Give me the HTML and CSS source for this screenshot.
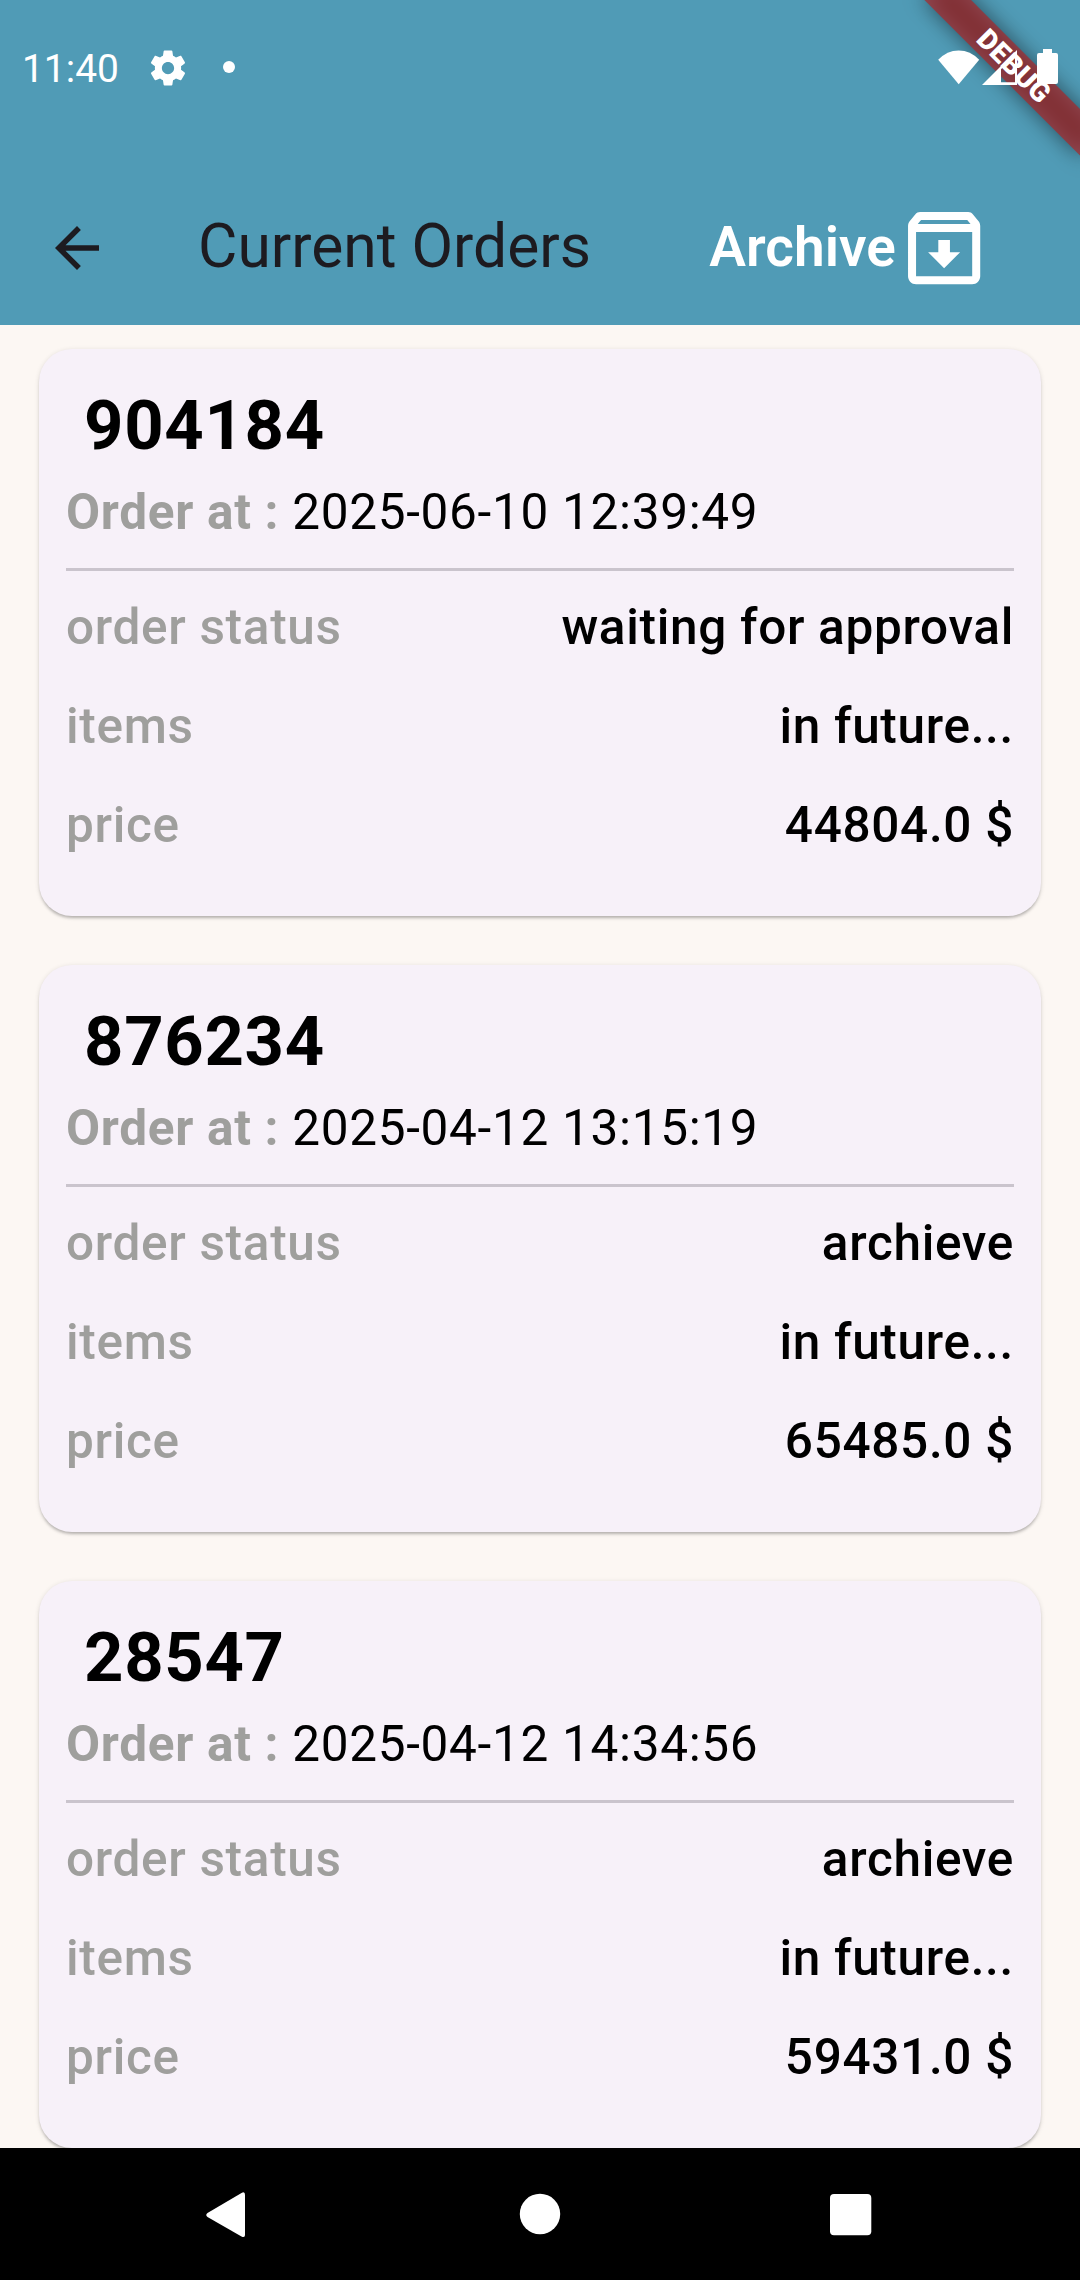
FILE: index.html
```html
<!DOCTYPE html>
<html lang="en">
<head>
<meta charset="utf-8">
<title>Current Orders</title>
<link rel="stylesheet" href="styles.css">
</head>
<body>
<div class="screen">
  <header class="header">
    <div class="debug-corner">
      <div class="debug-shadow"></div>
      <div class="debug-banner">DEBUG</div>
    </div>
    <div class="status">
      <span class="clock">11:40</span>
      <svg class="gear" viewBox="0 0 24 24"><path fill="currentColor" d="M19.43 12.98c.04-.32.07-.64.07-.98s-.03-.66-.07-.98l2.11-1.65c.19-.15.24-.42.12-.64l-2-3.46c-.12-.22-.39-.3-.61-.22l-2.49 1c-.52-.4-1.08-.73-1.69-.98l-.38-2.65C14.46 2.18 14.25 2 14 2h-4c-.25 0-.46.18-.49.42l-.38 2.65c-.61.25-1.17.59-1.69.98l-2.49-1c-.23-.09-.49 0-.61.22l-2 3.46c-.13.22-.07.49.12.64l2.11 1.65c-.04.32-.07.65-.07.98s.03.66.07.98l-2.11 1.65c-.19.15-.24.42-.12.64l2 3.46c.12.22.39.3.61.22l2.49-1c.52.4 1.08.73 1.69.98l.38 2.65c.03.24.24.42.49.42h4c.25 0 .46-.18.49-.42l.38-2.65c.61-.25 1.17-.59 1.69-.98l2.49 1c.23.09.49 0 .61-.22l2-3.46c.12-.22.07-.49-.12-.64l-2.11-1.65zM12 15.5c-1.93 0-3.5-1.57-3.5-3.5s1.57-3.5 3.5-3.5 3.5 1.57 3.5 3.5-1.57 3.5-3.5 3.5z"/></svg>
      <span class="dot"></span>
      <svg class="system" viewBox="0 0 124 38">
        <g fill="currentColor">
          <path d="M20.700 36.200L.2 11.800Q9 2.500 20.700 2.500T41.200 11.800Z"/>
          <path fill-rule="evenodd" d="M44 37L79 2V37ZM63 21.200V34.200H77V7.200Z"/>
          <path d="M105 1H114V5H118Q120 5 120 7V34Q120 36 118 36H101Q99 36 99 34V7Q99 5 101 5H105Z"/>
        </g>
      </svg>
    </div>
    <div class="appbar">
      <svg class="back" viewBox="0 0 24 24"><path fill="currentColor" d="M20 11H7.830l5.590-5.590L12 4l-8 8 8 8 1.410-1.410L7.830 13H20v-2z"/></svg>
      <h1 class="title">Current Orders</h1>
      <div class="archive">
        <span class="archive-text">Archive</span>
        <svg class="archive-icon" viewBox="0 0 24 24"><path fill="currentColor" d="M20.540 5.230l-1.390-1.680C18.880 3.210 18.470 3 18 3H6c-.47 0-.88.21-1.160.55L3.460 5.230C3.170 5.570 3 6.020 3 6.500V19c0 1.100.9 2 2 2h14c1.100 0 2-.9 2-2V6.500c0-.48-.17-.93-.46-1.270zM6.240 5h11.520l.83 1H5.420l.82-1zM5 19V8h14v11H5zm8.450-9h-2.900v3H8l4 4 4-4h-2.550z"/></svg>
      </div>
    </div>
  </header>
  <main class="orders">
    <article class="card">
      <h2 class="number">904184</h2>
      <p class="date"><b>Order at : </b>2025-06-10 12:39:49</p>
      <hr class="divider">
      <div class="row"><span class="label">order status</span><span>waiting for approval</span></div>
      <div class="row"><span class="label">items</span><span>in future...</span></div>
      <div class="row"><span class="label">price</span><span>44804.0 $</span></div>
    </article>
    <article class="card">
      <h2 class="number">876234</h2>
      <p class="date"><b>Order at : </b>2025-04-12 13:15:19</p>
      <hr class="divider">
      <div class="row"><span class="label">order status</span><span>archieve</span></div>
      <div class="row"><span class="label">items</span><span>in future...</span></div>
      <div class="row"><span class="label">price</span><span>65485.0 $</span></div>
    </article>
    <article class="card">
      <h2 class="number">28547</h2>
      <p class="date"><b>Order at : </b>2025-04-12 14:34:56</p>
      <hr class="divider">
      <div class="row"><span class="label">order status</span><span>archieve</span></div>
      <div class="row"><span class="label">items</span><span>in future...</span></div>
      <div class="row"><span class="label">price</span><span>59431.0 $</span></div>
    </article>
  </main>
  <nav class="navbar">
    <svg class="nav-icon" viewBox="0 0 48 48"><path fill="currentColor" d="M40 5V45Q40 48 36.500 46.500L2.500 27Q0 25 2.500 23L36.500 3Q40 1 40 5Z"/></svg>
    <svg class="nav-icon" viewBox="0 0 48 48"><circle cx="24" cy="24" r="20.200" fill="currentColor"/></svg>
    <svg class="nav-icon" viewBox="0 0 48 48"><rect x="3" y="4" width="41.300" height="41.300" rx="4" fill="currentColor"/></svg>
  </nav>
</div>
</body>
</html>
```
FILE: styles.css
```css
* { box-sizing: border-box; }
body { margin: 0; font-family: Roboto, sans-serif; background: #fcf7f3; }
.screen { width: 1080px; height: 2280px; display: flex; flex-direction: column; overflow: hidden; }
svg { display: block; flex: none; }

.header { position: relative; height: 325px; flex: none; background: #509bb6; }

/* Ribbon centred on the top right corner, then pushed out along the diagonal */
.debug-corner { position: absolute; inset: 0; overflow: hidden; }
.debug-shadow, .debug-banner {
  position: absolute; left: 970px; top: 0; width: 220px; height: 33px;
  transform-origin: 110px 0; transform: rotate(45deg) translateY(77px);
}
.debug-shadow { background: rgba(0, 0, 0, .5); filter: blur(10.900px); }
.debug-banner {
  background: rgba(183, 28, 28, .627); color: #fff; text-align: center;
  font-size: 28px; line-height: 33px; font-weight: 900; letter-spacing: .3px;
}

.status { position: relative; height: 132px; padding: 0 18px 0 22px; display: flex; align-items: center; color: #fff; }
.clock { width: 125px; font-size: 38.900px; line-height: 46px; padding-top: 5px; }
.gear { width: 42px; height: 42px; margin-top: 3px; }
.dot { width: 12px; height: 12px; margin: 2px 0 0 34px; border-radius: 50%; background: currentColor; }
.system { width: 124px; height: 38px; margin: 2px 0 0 auto; }

.appbar { position: relative; height: 154px; margin-top: 39px; display: flex; align-items: center; padding: 0 88px 0 44px; }
.back { width: 66px; height: 66px; color: #1d1b20; }
.title { margin: 0 0 2px 88px; font-size: 60.500px; line-height: 76px; font-weight: 400; color: #1d1b20; }
.archive { margin-left: auto; display: flex; align-items: center; color: #fff; font-size: 55px; font-weight: 600; }
.archive-text { margin-bottom: 2px; }
.archive-icon { width: 96.250px; height: 96.250px; }

.orders { flex: 1; min-height: 0; overflow: hidden; padding: 24px 39px 0; display: flex; flex-direction: column; gap: 49px; }
.card {
  height: 567px; flex: none; padding: 28px 27px 0; border-radius: 33px; background: #f7f1f9; color: #000;
  box-shadow: 0 3px 3px -1px rgba(0, 0, 0, .22), 0 1px 5px rgba(0, 0, 0, .12);
  font-size: 49.500px; letter-spacing: .6875px;
}
.number { margin: 0 0 0 18px; font-size: 68.750px; line-height: 98px; font-weight: 700; }
.date { margin: 2px 0 0; line-height: 71px; white-space: pre; }
.date b { color: #9f9f9d; }
.divider { margin: 20px 0 6px; height: 3px; border: 0; background: #cac4cd; }
.row { height: 99px; display: flex; justify-content: space-between; align-items: center; font-weight: 500; }
.label { color: #9f9f9d; }

.navbar { height: 132px; flex: none; background: #000; color: #fff; display: flex; align-items: center; justify-content: center; gap: 263px; }
.nav-icon { width: 48px; height: 48px; }
```
